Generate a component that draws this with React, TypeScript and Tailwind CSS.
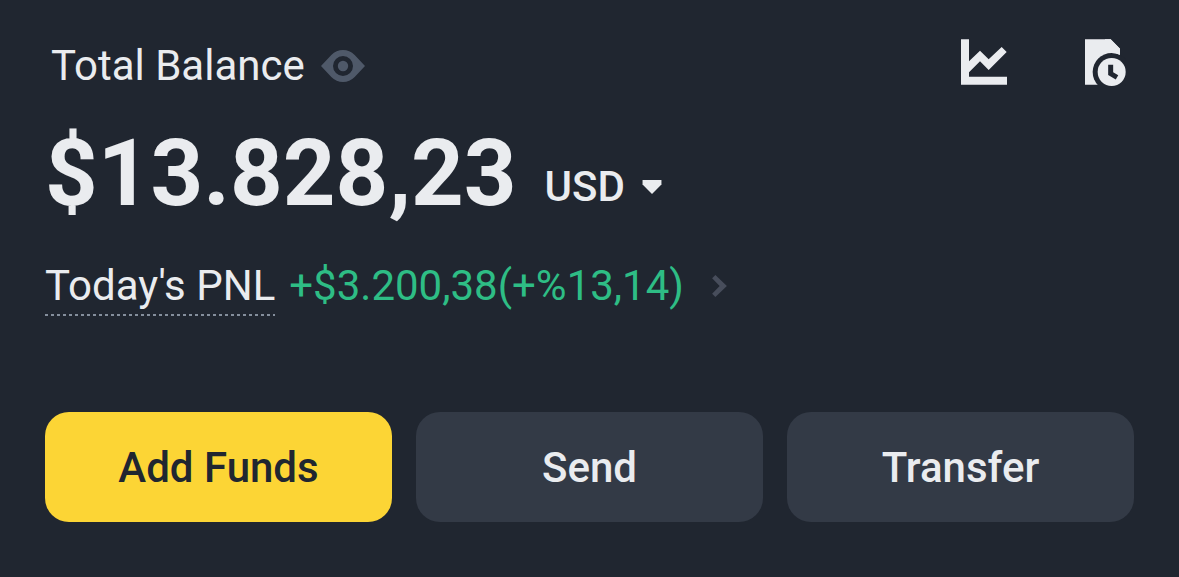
function EyeIcon() {
  return (
    <svg className="h-8 w-11" viewBox="0 0 132 96" fill="#4f5969" aria-hidden="true">
      <path
        fillRule="evenodd"
        d="M0 48L31 15Q46 0 66 0Q86 0 101 15L132 48L101 81Q86 96 66 96Q46 96 31 81ZM66 18A30 30 0 1 0 66 78A30 30 0 1 0 66 18Z"
      />
      <circle cx="66" cy="48" r="15.500" />
    </svg>
  );
}

function ChartIcon() {
  return (
    <svg className="h-[46px] w-[46px]" viewBox="0 0 138 138" fill="currentColor" aria-hidden="true">
      <path d="M0 1H24V113H138V137H0Z" />
      <path d="M24 67L57 35L83 61L122 24L137 39L83 93L57 67L24 100Z" />
    </svg>
  );
}

function HistoryIcon() {
  return (
    <svg className="h-[47px] w-[41px]" viewBox="0 0 123 141" aria-hidden="true">
      <path d="M0 1H77L105 29V80H90V137H0Z" fill="#eaecef" />
      <circle cx="80" cy="99" r="57" fill="#202630" />
      <path d="M77 1L105 29V47Q93 42 80 42H60V1Z" fill="#eaecef" />
      <circle cx="80" cy="99" r="42" fill="#eaecef" />
      <path d="M77 77V104L96 115" fill="none" stroke="#202630" strokeWidth="15" />
    </svg>
  );
}

function CaretIcon() {
  return (
    <svg className="h-[14px] w-5" viewBox="0 0 58 43" fill="currentColor" aria-hidden="true">
      <path d="M0 0H58V14L29 43L0 14Z" />
    </svg>
  );
}

function ChevronIcon() {
  return (
    <svg className="h-[22px] w-[15px]" viewBox="0 0 45 67" fill="#474d5b" aria-hidden="true">
      <path d="M10 0L45 33.500L10 67L0 57L23 33.500L0 10Z" />
    </svg>
  );
}

const secondaryButton = "h-[110px] rounded-3xl bg-[#333a46] text-[42px] font-medium text-[#eaecef]";

export default function App() {
  return (
    <main className="min-h-screen bg-[#202630] px-[45px] pt-[34px] pb-14 font-[Roboto,'Liberation_Sans',sans-serif] text-[#eaecef]">
      <header className="flex h-16 items-center justify-between pr-2 pl-1.5">
        <div className="flex items-center gap-4">
          <h1 className="text-[42px] leading-[64px] font-normal">Total Balance</h1>
          <button type="button" aria-label="Hide balance">
            <EyeIcon />
          </button>
        </div>
        <div className="flex items-start gap-[78px] pb-2">
          <button type="button" aria-label="Analysis">
            <ChartIcon />
          </button>
          <button type="button" aria-label="History">
            <HistoryIcon />
          </button>
        </div>
      </header>

      <div className="mt-[22px] flex items-end gap-7">
        <p className="text-[92px] leading-[108px] font-bold">$13.828,23</p>
        <div className="flex items-center gap-4 pb-[17px]">
          <select
            aria-label="Currency"
            defaultValue="USD"
            className="appearance-none bg-transparent text-[42px] leading-[48px] font-medium"
          >
            <option value="USD">USD</option>
          </select>
          <CaretIcon />
        </div>
      </div>

      <div className="mt-7 flex items-start gap-3.5">
        <span className="bg-[repeating-linear-gradient(90deg,#848e9c_0_3px,transparent_3px_6px)] bg-[length:100%_2px] bg-bottom bg-no-repeat text-[42px] leading-[60px]">
          Today's PNL
        </span>
        <a href="#pnl" className="flex items-center gap-7 text-[42px] leading-[60px] text-[#2ebd85]">
          +$3.200,38(+%13,14)
          <ChevronIcon />
        </a>
      </div>

      <div className="mt-24 grid grid-cols-3 gap-6">
        <button type="button" className="h-[110px] rounded-3xl bg-[#fcd535] text-[42px] font-medium text-[#202630]">
          Add Funds
        </button>
        <button type="button" className={secondaryButton}>
          Send
        </button>
        <button type="button" className={secondaryButton}>
          Transfer
        </button>
      </div>
    </main>
  );
}
